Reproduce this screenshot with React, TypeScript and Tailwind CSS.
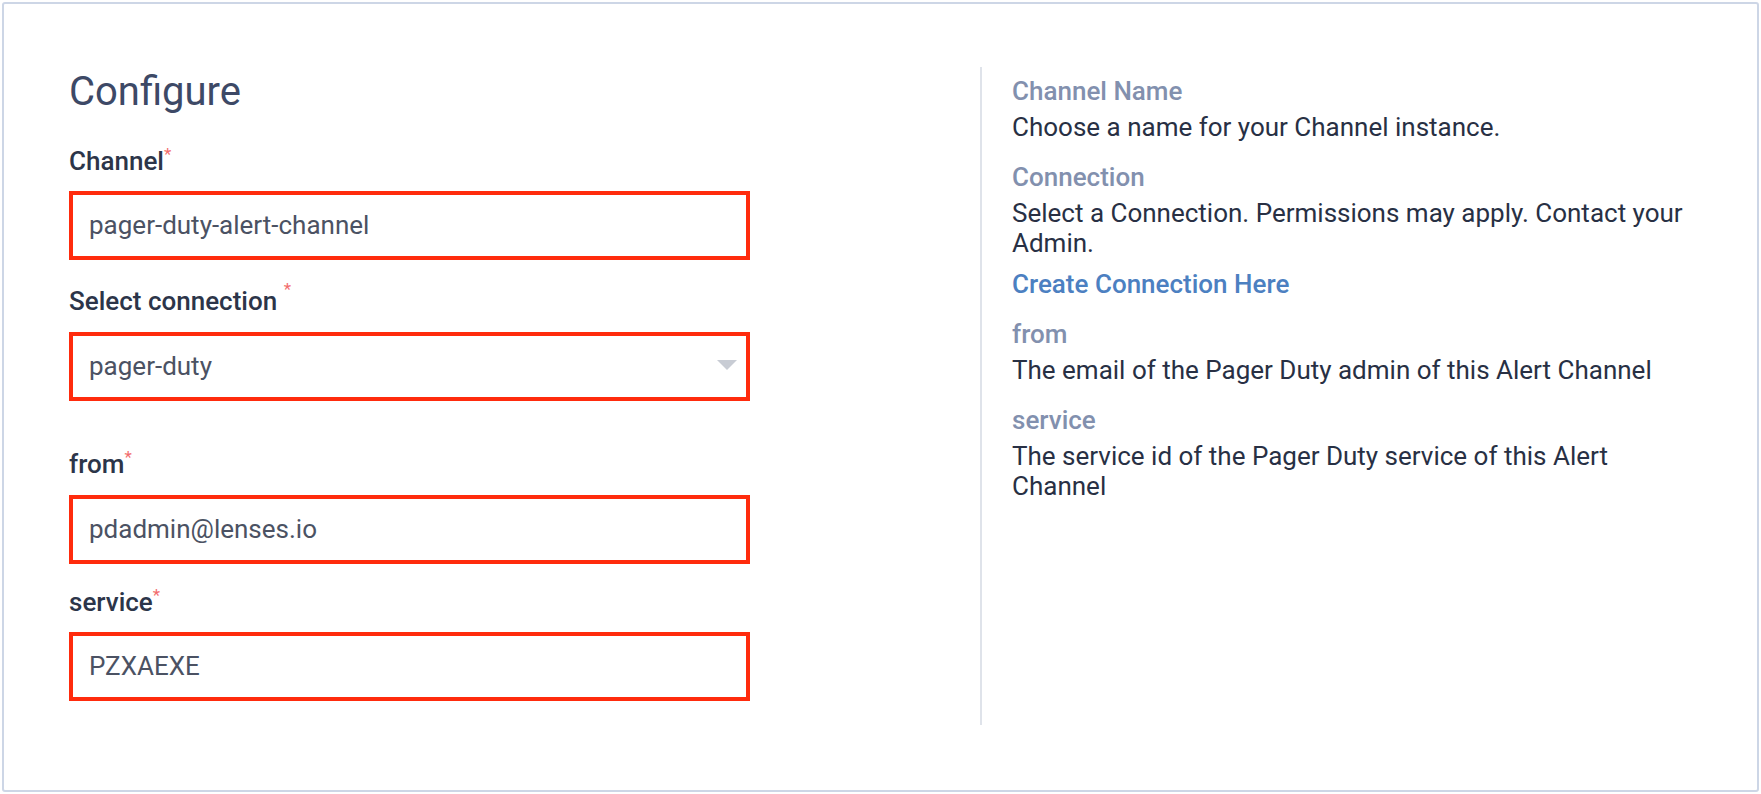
const fields = [
  { label: "Channel", value: "pager-duty-alert-channel", gap: "mt-[30px]", inputGap: "mt-[15px]", spaced: false, select: false },
  { label: "Select connection", value: "pager-duty", gap: "mt-[26px]", inputGap: "mt-[16px]", spaced: true, select: true },
  { label: "from", value: "pdadmin@lenses.io", gap: "mt-[48px]", inputGap: "mt-[16px]", spaced: false, select: false },
  { label: "service", value: "PZXAEXE", gap: "mt-[23px]", inputGap: "mt-[15px]", spaced: false, select: false },
];

const help = [
  { title: "Channel Name", text: "Choose a name for your Channel instance." },
  {
    title: "Connection",
    text: "Select a Connection. Permissions may apply. Contact your Admin.",
    link: "Create Connection Here",
  },
  { title: "from", text: "The email of the Pager Duty admin of this Alert Channel" },
  { title: "service", text: "The service id of the Pager Duty service of this Alert Channel" },
];

function Field({ f }: { f: (typeof fields)[number] }) {
  return (
    <div>
      <div className={`${f.gap} h-[30px] text-[26px] leading-[30px] font-medium text-[#2c3549]`}>
        {f.label}
        {f.spaced && " "}
        <span
          className={`relative text-[17px] leading-none font-normal text-[#f26d6d] ${
            f.spaced ? "-top-[15px]" : "-top-[10px]"
          }`}
        >
          *
        </span>
      </div>
      <div
        className={`${f.inputGap} flex h-[69px] w-[681px] items-center justify-between border-4 border-[#ff2b0d] bg-white pl-[16px] pr-[9px] text-[26px] text-[#4b5263]`}
      >
        <span>{f.value}</span>
        {f.select && (
          <svg width="20" height="10" viewBox="0 0 20 10" className="-mt-[4px]">
            <path d="M0 0 L20 0 L10 10 Z" fill="#c8ccd4" />
          </svg>
        )}
      </div>
    </div>
  );
}

export default function App() {
  return (
    <div className="min-h-screen bg-white p-[2px] font-['Roboto',sans-serif]">
      <div className="h-[790px] rounded-[3px] border-2 border-[#cdd6e6] bg-white">
        <div className="flex pl-[65px] pt-[63px]">
          <div className="w-[911px] pt-[1px]">
            <h1 className="h-[48px] text-[40px] leading-[48px] font-normal text-[#3d4966]">Configure</h1>
            {fields.map((f) => (
              <Field key={f.label} f={f} />
            ))}
          </div>

          <div className="h-[658px] border-l-2 border-[#dfe3ea] pl-[30px] pt-[9px]">
            <div className="flex w-[680px] flex-col gap-[20px] text-[26px] leading-[30px]">
              {help.map((h) => (
                <div key={h.title}>
                  <p className="font-medium text-[#8290ae]">{h.title}</p>
                  <p className="mt-[6px] text-[#283044]">{h.text}</p>
                  {h.link && (
                    <a className="mt-[11px] block font-medium text-[#4c80c1]" href="#">
                      {h.link}
                    </a>
                  )}
                </div>
              ))}
            </div>
          </div>
        </div>
      </div>
    </div>
  );
}
